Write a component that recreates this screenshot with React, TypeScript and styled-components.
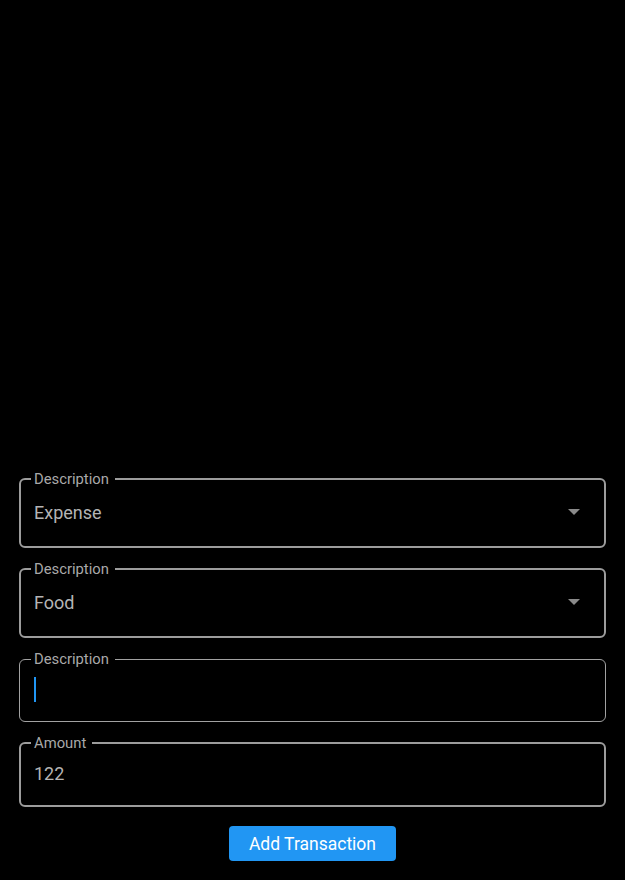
import React from "react";
import styled, { createGlobalStyle } from "styled-components";

const Global = createGlobalStyle`
  html, body { margin: 0; padding: 0; background: #000; }
  body { font-family: Roboto, "Liberation Sans", sans-serif; }
  * { box-sizing: border-box; }
`;

const Page = styled.div`
  min-height: 880px;
  display: flex;
  flex-direction: column;
  justify-content: flex-end;
  padding: 0 19px 19px 19px;
`;

const Form = styled.form`
  display: flex;
  flex-direction: column;
  gap: 13px;
`;

const Field = styled.fieldset<{ $border: number }>`
  margin: 0;
  padding: 0;
  min-width: 0;
  border: ${(p) => p.$border}px solid ${(p) => (p.$border === 1 ? "#a2a2a2" : "#9c9c9c")};
  border-radius: 6px;
`;

const Legend = styled.legend<{ $border: number }>`
  margin-left: ${(p) => 12 - p.$border}px;
  padding: 0 6px 0 3px;
  font-size: 14.8px;
  line-height: 16px;
  color: #a9a9a9;
`;

const Row = styled.div<{ $border: number; $h: number }>`
  height: ${(p) => p.$h}px;
  margin-bottom: 9px;
  display: flex;
  align-items: center;
  padding-left: ${(p) => 15 - p.$border}px;
  padding-right: ${(p) => 26 - p.$border}px;
  font-size: 18px;
  color: #b4b4b4;
`;

const Value = styled.span`
  flex: 1;
`;

const Caret = styled.span`
  display: block;
  width: 2px;
  height: 25px;
  background: #2196f3;
`;

const Button = styled.button`
  align-self: center;
  margin-top: 6px;
  width: 167px;
  height: 35px;
  border: none;
  border-radius: 4px;
  background: #2196f3;
  color: #fff;
  font-family: Roboto, "Liberation Sans", sans-serif;
  font-size: 17.5px;
  font-weight: 400;
  padding: 0;
  cursor: pointer;
`;

const Arrow = () => (
  <svg width="12" height="6" viewBox="0 0 12 6">
    <path d="M0 0 L12 0 L6 6 Z" fill="#8a8a8a" />
  </svg>
);

const SelectField = ({ label, value }: { label: string; value: string }) => (
  <Field $border={2}>
    <Legend $border={2}>{label}</Legend>
    <Row $border={2} $h={50}>
      <Value>{value}</Value>
      <Arrow />
    </Row>
  </Field>
);

export default function App() {
  return (
    <>
      <Global />
      <Page>
        <Form onSubmit={(e) => e.preventDefault()}>
          <SelectField label="Description" value="Expense" />
          <SelectField label="Description" value="Food" />
          <Field $border={1}>
            <Legend $border={1}>Description</Legend>
            <Row $border={1} $h={45}>
              <Caret />
            </Row>
          </Field>
          <Field $border={2}>
            <Legend $border={2}>Amount</Legend>
            <Row $border={2} $h={45}>
              <Value>122</Value>
            </Row>
          </Field>
          <Button type="submit">Add Transaction</Button>
        </Form>
      </Page>
    </>
  );
}
